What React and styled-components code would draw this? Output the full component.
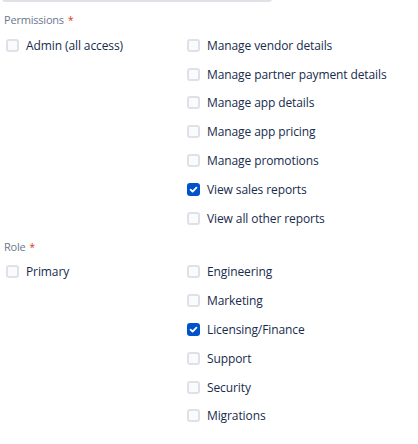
import React from 'react'
import styled, { createGlobalStyle } from 'styled-components'

const Global = createGlobalStyle`
	body {
		margin: 0;
		background: #fff;
		font-family: "Open Sans", "Noto Sans", sans-serif;
		color: #172b4d;
	}
`

const Page = styled.div`
	padding: 0 4px;
	width: 418px;
	box-sizing: border-box;
`

const InputEdge = styled.div`
	width: 270px;
	height: 3px;
	margin-left: -2px;
	margin-top: -1px;
	border: 2px solid #dfe1e6;
	border-top: none;
	border-radius: 0 0 3px 3px;
	box-sizing: border-box;
`

const Label = styled.div`
	font-size: 11px;
	letter-spacing: -0.2px;
	color: #6b778c;
	line-height: 16px;
	margin-top: ${p => p.top}px;
	margin-bottom: 3px;
`

const Required = styled.span`
	color: #de350b;
	margin-left: 4px;
	font-size: 10px;
`

const Group = styled.div`
	display: grid;
	grid-template-columns: 181px 1fr;
`

const Column = styled.div`
	display: flex;
	flex-direction: column;
`

const Option = styled.label`
	display: flex;
	align-items: center;
	gap: 7px;
	height: 28.8px;
	padding-left: 2px;
	font-size: 12px;
	letter-spacing: -0.1px;
	color: #172b4d;
	white-space: nowrap;
`

const Box = styled.span`
	width: 13px;
	height: 13px;
	box-sizing: border-box;
	border-radius: 3px;
	border: ${p => (p.checked ? 'none' : '2px solid #dfe1e6')};
	background: ${p => (p.checked ? '#0052cc' : '#fafbfc')};
	display: flex;
	align-items: center;
	justify-content: center;
	flex: 0 0 auto;
`

const Check = () => (
	<svg width="9" height="9" viewBox="0 0 8 8">
		<path d="M1.4 4.1 L3.2 5.8 L6.6 2.3" fill="none" stroke="#fff" strokeWidth="1.6" strokeLinecap="round" strokeLinejoin="round" />
	</svg>
)

function Checkbox({ label, checked }) {
	return (
		<Option>
			<Box checked={checked}>{checked && <Check />}</Box>
			{label}
		</Option>
	)
}

const permissions = [
	['Manage vendor details'],
	['Manage partner payment details'],
	['Manage app details'],
	['Manage app pricing'],
	['Manage promotions'],
	['View sales reports', true],
	['View all other reports'],
]

const roles = [
	['Engineering'],
	['Marketing'],
	['Licensing/Finance', true],
	['Support'],
	['Security'],
	['Migrations'],
]

export default function App() {
	return (
		<Page>
			<Global />
			<InputEdge />
			<Label top={10}>
				Permissions<Required>*</Required>
			</Label>
			<Group>
				<Column>
					<Checkbox label="Admin (all access)" />
				</Column>
				<Column>
					{permissions.map(([l, c]) => (
						<Checkbox key={l} label={l} checked={c} />
					))}
				</Column>
			</Group>
			<Label top={6}>
				Role<Required>*</Required>
			</Label>
			<Group>
				<Column>
					<Checkbox label="Primary" />
				</Column>
				<Column>
					{roles.map(([l, c]) => (
						<Checkbox key={l} label={l} checked={c} />
					))}
				</Column>
			</Group>
		</Page>
	)
}
